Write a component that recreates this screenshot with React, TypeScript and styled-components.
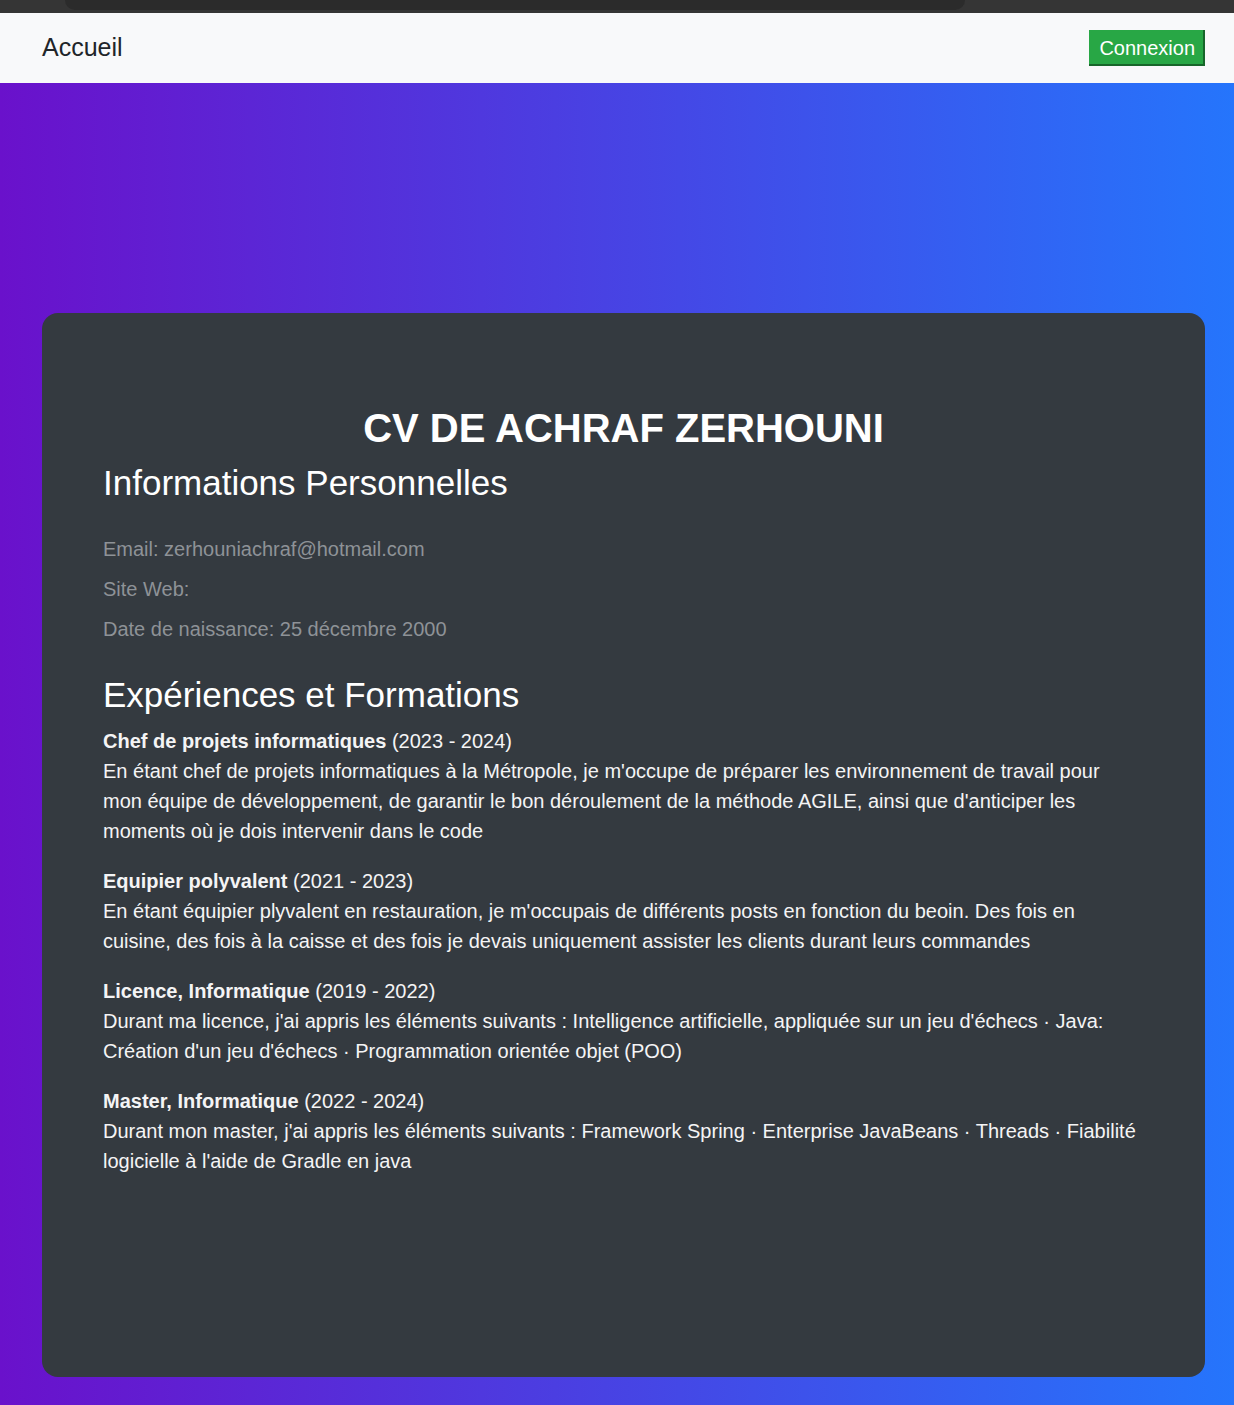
import React from "react";
import styled, { createGlobalStyle } from "styled-components";

const GlobalStyle = createGlobalStyle`
  html, body {
    margin: 0;
    padding: 0;
    font-family: "Liberation Sans", Arial, sans-serif;
    background: #2575fc;
  }
  * { box-sizing: border-box; }
`;

const ChromeBar = styled.div`
  height: 13px;
  background: #353535;
  padding: 0 269px 0 65px;
  display: flex;
`;

const UrlBar = styled.div`
  flex: 1;
  height: 10px;
  background: #2b2b2b;
  border-radius: 0 0 12px 12px;
`;

const NavBar = styled.nav`
  height: 70px;
  background: #f8f9fa;
  display: flex;
  align-items: center;
  justify-content: space-between;
  padding: 0 29px 0 42px;
`;

const Brand = styled.a`
  font-size: 25px;
  color: #212529;
  text-decoration: none;
  margin-top: -2px;
`;

const LoginButton = styled.button`
  font-family: "Liberation Sans", Arial, sans-serif;
  font-size: 20px;
  color: #ffffff;
  background: #28a745;
  border: none;
  border-right: 2px solid #17662a;
  border-bottom: 2px solid #17662a;
  height: 36px;
  padding: 2px 8px 0 10px;
  line-height: 32px;
`;

const Main = styled.main`
  background: linear-gradient(to right, #6a11cb, #2575fc);
  padding: 230px 29px 28px 42px;
`;

const Card = styled.section`
  background: #343a40;
  border-radius: 16px;
  min-height: 1064px;
  padding: 91px 61px 60px 61px;
  color: #f4f4f5;
`;

const Title = styled.h1`
  margin: 0 0 10px 0;
  font-size: 40px;
  line-height: 48px;
  font-weight: 700;
  text-align: center;
  color: #ffffff;
`;

const SectionTitle = styled.h2`
  margin: 0;
  font-size: 35px;
  line-height: 42px;
  font-weight: 400;
  color: #ffffff;
`;

const InfoList = styled.div`
  display: flex;
  flex-direction: column;
  gap: 16px;
  margin: 33px 0 33px 0;
`;

const InfoLine = styled.p`
  margin: 0;
  font-size: 20px;
  line-height: 24px;
  color: #8e9297;
`;

const Items = styled.div`
  display: flex;
  flex-direction: column;
  gap: 20px;
  margin-top: 10px;
`;

const Item = styled.div`
  font-size: 20px;
  line-height: 30px;
  color: #f4f4f5;
`;

const ItemTitle = styled.div``;

const Strong = styled.strong`
  font-weight: 700;
`;

const ItemText = styled.div``;

const items = [
  {
    title: "Chef de projets informatiques",
    years: "(2023 - 2024)",
    text: "En étant chef de projets informatiques à la Métropole, je m'occupe de préparer les environnement de travail pour mon équipe de développement, de garantir le bon déroulement de la méthode AGILE, ainsi que d'anticiper les moments où je dois intervenir dans le code",
  },
  {
    title: "Equipier polyvalent",
    years: "(2021 - 2023)",
    text: "En étant équipier plyvalent en restauration, je m'occupais de différents posts en fonction du beoin. Des fois en cuisine, des fois à la caisse et des fois je devais uniquement assister les clients durant leurs commandes",
  },
  {
    title: "Licence, Informatique",
    years: "(2019 - 2022)",
    text: "Durant ma licence, j'ai appris les éléments suivants : Intelligence artificielle, appliquée sur un jeu d'échecs · Java: Création d'un jeu d'échecs · Programmation orientée objet (POO)",
  },
  {
    title: "Master, Informatique",
    years: "(2022 - 2024)",
    text: "Durant mon master, j'ai appris les éléments suivants : Framework Spring · Enterprise JavaBeans · Threads · Fiabilité logicielle à l'aide de Gradle en java",
  },
];

export default function App() {
  return (
    <>
      <GlobalStyle />
      <ChromeBar>
        <UrlBar />
      </ChromeBar>
      <NavBar>
        <Brand href="#">Accueil</Brand>
        <LoginButton>Connexion</LoginButton>
      </NavBar>
      <Main>
        <Card>
          <Title>CV DE ACHRAF ZERHOUNI</Title>
          <SectionTitle>Informations Personnelles</SectionTitle>
          <InfoList>
            <InfoLine>Email: zerhouniachraf@hotmail.com</InfoLine>
            <InfoLine>Site Web:</InfoLine>
            <InfoLine>Date de naissance: 25 décembre 2000</InfoLine>
          </InfoList>
          <SectionTitle>Expériences et Formations</SectionTitle>
          <Items>
            {items.map((it) => (
              <Item key={it.title}>
                <ItemTitle>
                  <Strong>{it.title}</Strong> {it.years}
                </ItemTitle>
                <ItemText>{it.text}</ItemText>
              </Item>
            ))}
          </Items>
        </Card>
      </Main>
    </>
  );
}
